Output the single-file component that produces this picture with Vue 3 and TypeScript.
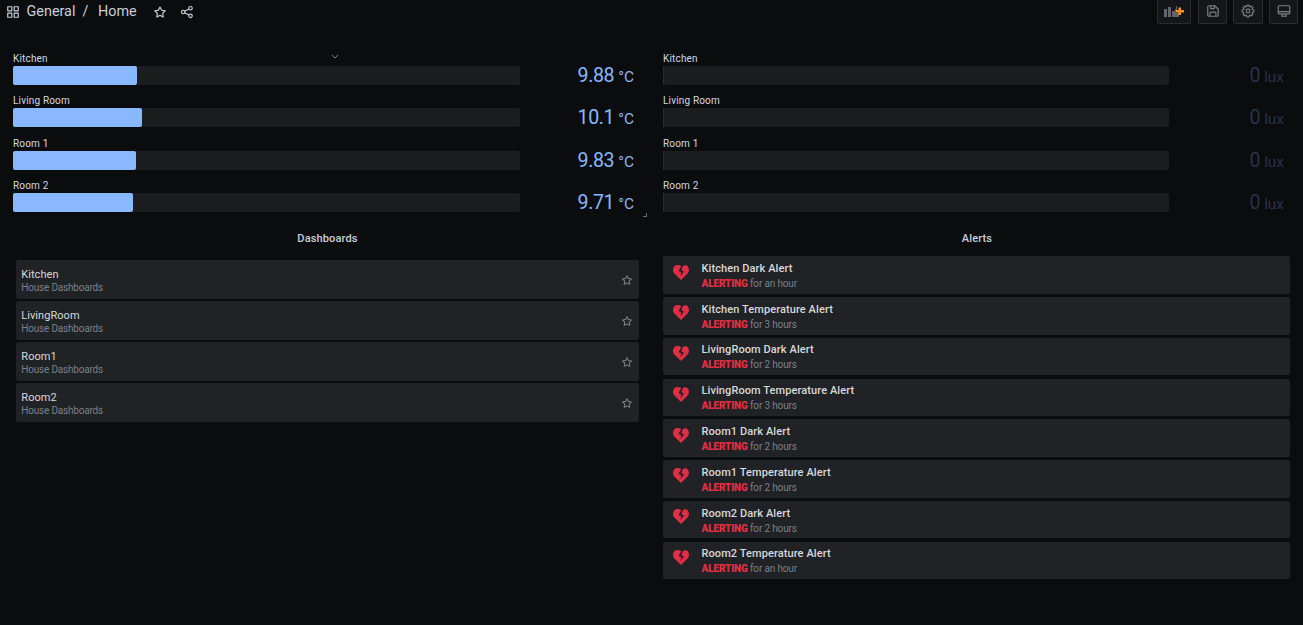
<script setup lang="ts">
interface Gauge { name: string; value: string; unit: string; fill: number }
interface Alert { name: string; since: string }

const temperatures: Gauge[] = [
  { name: 'Kitchen', value: '9.88', unit: '°C', fill: 124 },
  { name: 'Living Room', value: '10.1', unit: '°C', fill: 129 },
  { name: 'Room 1', value: '9.83', unit: '°C', fill: 123 },
  { name: 'Room 2', value: '9.71', unit: '°C', fill: 120 },
]
const lights: Gauge[] = ['Kitchen', 'Living Room', 'Room 1', 'Room 2'].map((name) => ({ name, value: '0', unit: 'lux', fill: 0 }))
const groups = [
  { kind: 'temp', gauges: temperatures },
  { kind: 'lux', gauges: lights },
]
const dashboards: string[] = ['Kitchen', 'LivingRoom', 'Room1', 'Room2']
const alerts: Alert[] = [
  { name: 'Kitchen Dark Alert', since: 'for an hour' },
  { name: 'Kitchen Temperature Alert', since: 'for 3 hours' },
  { name: 'LivingRoom Dark Alert', since: 'for 2 hours' },
  { name: 'LivingRoom Temperature Alert', since: 'for 3 hours' },
  { name: 'Room1 Dark Alert', since: 'for 2 hours' },
  { name: 'Room1 Temperature Alert', since: 'for 2 hours' },
  { name: 'Room2 Dark Alert', since: 'for 2 hours' },
  { name: 'Room2 Temperature Alert', since: 'for an hour' },
]
const starPath =
  'M22,9.67A1,1,0,0,0,21.14,9l-5.69-.83L12.9,3a1,1,0,0,0-1.8,0L8.55,8.16,2.86,9a1,1,0,0,0-.81.68,1,1,0,0,0,.25,1l4.13,4-1,5.68A1,1,0,0,0,6.9,21.44L12,18.77l5.1,2.67a.93.93,0,0,0,.46.12,1,1,0,0,0,.59-.19,1,1,0,0,0,.4-1l-1-5.68,4.13-4A1,1,0,0,0,22,9.67Zm-6.15,4a1,1,0,0,0-.29.88l.72,4.2-3.76-2a1.06,1.06,0,0,0-.94,0l-3.76,2,.72-4.2a1,1,0,0,0-.29-.88l-3-3,4.21-.61a1,1,0,0,0,.76-.55L12,5.7l1.88,3.82a1,1,0,0,0,.76.55l4.21.61Z'
</script>

<template>
  <div class="page">
    <header class="navbar">
      <svg class="apps" viewBox="0 0 24 24" fill="none" stroke="currentColor" stroke-width="2" stroke-linejoin="round">
        <path d="M3 3h7v7H3zM14 3h7v7h-7zM3 14h7v7H3zM14 14h7v7h-7z" />
      </svg>
      <span class="crumb folder">General</span>
      <span class="crumb slash">/</span>
      <span class="crumb title">Home</span>
      <svg class="nav-star" viewBox="0 0 24 24" fill="currentColor"><path :d="starPath" /></svg>
      <svg class="share" viewBox="0 0 24 24" fill="none" stroke="currentColor" stroke-width="2">
        <circle cx="18" cy="5.5" r="3" /><circle cx="5.5" cy="12" r="3" /><circle cx="18" cy="18.5" r="3" />
        <path d="M8.2 10.6l7.1-3.7M8.2 13.4l7.1 3.7" />
      </svg>
      <div class="actions">
        <button class="action wide" aria-label="Add panel">
          <svg class="add-panel" viewBox="0 0 20 14">
            <path class="columns" d="M0 5h3v8H0zM4 3h3v10H4zM8 7h3v6H8zM12 2h1v4h-1v3h3v4h-3zM11 5h1v8h-1z" />
            <path class="plus" d="M14.500 3.500h2.500v2.500h3v2.500h-3V11h-2.500V8.500H12V6h2.500z" />
          </svg>
        </button>
        <button class="action" aria-label="Save dashboard">
          <svg viewBox="0 0 24 24" fill="none" stroke="currentColor" stroke-width="2" stroke-linejoin="round">
            <path d="M3 5a2 2 0 0 1 2-2h10l6 6v10a2 2 0 0 1-2 2H5a2 2 0 0 1-2-2zM8 3v5h6V3M7 21v-6a1 1 0 0 1 1-1h8a1 1 0 0 1 1 1v6" />
          </svg>
        </button>
        <button class="action settings" aria-label="Settings">
          <svg viewBox="0 0 24 24" fill="none" stroke="currentColor" stroke-width="2" stroke-linejoin="round">
            <path d="M9.7 4.4L10.2 2h3.6l.5 2.4 1.5.6 2.1-1.4 2.5 2.5L19 8.2l.6 1.5 2.4.5v3.6l-2.4.5-.6 1.5 1.4 2.1-2.5 2.5-2.1-1.4-1.5.6-.5 2.4h-3.6l-.5-2.4-1.5-.6-2.1 1.4-2.5-2.5L5 15.8l-.6-1.5-2.4-.5v-3.6l2.4-.5L5 8.2 3.600 6.100l2.500-2.500L8.200 5z" />
            <circle cx="12" cy="12" r="3.2" />
          </svg>
        </button>
        <button class="action" aria-label="Cycle view mode">
          <svg viewBox="0 0 24 24" fill="none" stroke="currentColor" stroke-width="2" stroke-linejoin="round">
            <path d="M4 3h16a2 2 0 0 1 2 2v10a2 2 0 0 1-2 2H4a2 2 0 0 1-2-2V5a2 2 0 0 1 2-2zM2 13h20M9 17v4M15 17v4M7 21h10" />
          </svg>
        </button>
      </div>
    </header>

    <main class="grid">
      <section v-for="group in groups" :key="group.kind" class="gauges" :class="group.kind">
        <div v-for="g in group.gauges" :key="g.name" class="gauge">
          <div class="label">{{ g.name }}</div>
          <div class="track"><div class="fill" :style="{ width: g.fill + 'px' }"></div></div>
          <div class="reading"><span class="value">{{ g.value }}</span><span class="unit">{{ g.unit }}</span></div>
        </div>
        <svg v-if="group.kind === 'temp'" class="menu-caret" viewBox="0 0 8 5"><path d="M1 1l3 3 3-3" /></svg>
        <i v-if="group.kind === 'temp'" class="resize"></i>
      </section>

      <section class="panel dashboards">
        <h2>Dashboards</h2>
        <ul>
          <li v-for="d in dashboards" :key="d">
            <div class="text"><div class="name">{{ d }}</div><div class="sub">House Dashboards</div></div>
            <svg class="star" viewBox="0 0 24 24" fill="currentColor"><path :d="starPath" /></svg>
          </li>
        </ul>
      </section>

      <section class="panel alerts">
        <h2>Alerts</h2>
        <ul>
          <li v-for="a in alerts" :key="a.name">
            <svg class="heart" viewBox="0 0 16 15">
              <path d="M8 15L1.300 8.500C-.4 6.700-.4 3.400 1.200 1.600 2.900-.2 5.800-.4 8.300 1.200L5.500 6l2.800 1.200L7.400 11.200 11 6.400 8.300 5.200l1.500-4C11.600-.4 13.700.1 14.900 1.600c1.500 1.900 1.400 5.100-.3 6.900z" />
            </svg>
            <div class="text">
              <div class="name">{{ a.name }}</div>
              <div class="sub"><b>ALERTING</b><span>{{ a.since }}</span></div>
            </div>
          </li>
        </ul>
      </section>
    </main>
  </div>
</template>

<style>
html, body { background: #0b0c0e; overflow: hidden; }
</style>

<style scoped>
* { box-sizing: border-box; }
.page {
  width: 1303px; height: 625px; overflow: hidden; color: #c7d0d9; background: #0b0c0e;
  font-family: Roboto, "Liberation Sans", sans-serif;
}
svg { display: block; flex: none; }
.navbar { display: flex; align-items: center; height: 24px; padding-left: 6px; }
.apps { width: 14px; height: 14px; margin: 0 6.500px 1px 0; }
.crumb { font-size: 14.4px; line-height: 24px; height: 24px; }
.folder { width: 56px; }
.slash { width: 15.500px; }
.title { width: 55px; }
.nav-star { width: 14px; height: 14px; margin-right: 13px; }
.share { width: 14px; height: 14px; }
.actions { display: flex; margin: 0 5px 0 auto; height: 24px; }
.action {
  display: flex; align-items: flex-start; justify-content: center; width: 29px; height: 24px; margin: 0 0 0 6px;
  padding: 4px 0 0; color: #7b8087; background: #141619; border: 1px solid #2a2c30; border-top: 0; border-radius: 0 0 2px 2px;
}
.action svg { width: 14px; height: 14px; }
.action.wide { width: 34px; margin-right: 1px; }
.action.settings { width: 30px; }
.action .add-panel { width: 20px; height: 14px; }
.columns { fill: #62666c; }
.plus { fill: #f79520; }

.grid { display: grid; grid-template-columns: 626px 627px; column-gap: 24px; padding: 28.5px 0 0 13px; }
.gauges { position: relative; height: 176px; }
.gauge { display: grid; grid-template-columns: 507px 1fr; grid-template-rows: 13.500px 19px; height: 42.33px; }
.lux .gauge { grid-template-columns: 506px 1fr; }
.label { grid-column: 1 / 3; padding-top: 0.6px; font-size: 10px; line-height: 12px; letter-spacing: 0.17px; white-space: nowrap; color: #d2dae2; }
.track { height: 19px; background: #1c1d1f; border-radius: 2px; }
.fill { height: 19px; background: #8ab8ff; border-radius: 2px; }
.lux .fill { border-left: 1px solid #232d3e; border-radius: 0; box-sizing: content-box; }
.reading { display: flex; align-items: baseline; justify-content: flex-end; padding-right: 5px; line-height: 20px; color: #8ab8ff; white-space: nowrap; }
.lux .reading { padding-right: 6px; color: #27334a; }
.value { font-size: 19.6px; letter-spacing: -0.4px; }
.unit { margin-left: 4px; font-size: 15.4px; }
.menu-caret { position: absolute; left: 318px; top: 1.5px; width: 8px; height: 5px; fill: none; stroke: #7b8087; }
.resize { position: absolute; left: 630px; top: 160px; width: 4px; height: 4px; border: solid #66696e; border-width: 0 1px 1px 0; }

h2 { margin: 0; font-size: 11px; font-weight: 500; line-height: 14px; text-align: center; padding-top: 3.5px; letter-spacing: 0.15px; }
ul { list-style: none; margin: 0; padding: 0; }
li { display: flex; background: #202226; border-radius: 2px; }
.name { color: #d8d9da; font-size: 11px; line-height: 13px; white-space: nowrap; }
.sub { color: #7b8087; font-size: 10px; line-height: 12px; white-space: nowrap; }
.dashboards h2 { padding-left: 3px; }
.alerts h2 { padding-left: 1px; }
.dashboards ul { display: grid; row-gap: 2px; padding: 14px 0 0 3px; }
.dashboards li { height: 39px; align-items: flex-start; justify-content: space-between; padding: 8px 6px 0 5.300px; }
.dashboards .name { letter-spacing: 0.05px; }
.dashboards .sub { padding-top: 1px; letter-spacing: -0.2px; }
.star { width: 12px; height: 12px; margin-top: 5.500px; color: #7b8087; }
.alerts ul { display: grid; row-gap: 3.200px; padding-top: 10.200px; }
.alerts li { height: 37.600px; padding: 5.650px 0 0 10px; }
.heart { width: 16px; height: 15px; margin: 2.700px 12.500px 0 0; fill: #e02f44; }
.alerts .name { font-weight: 500; letter-spacing: 0.09px; }
.alerts .sub { padding-top: 3px; letter-spacing: -0.15px; }
.alerts b { display: inline-block; width: 48.500px; color: #e02f44; font-weight: 900; letter-spacing: -0.15px; }
</style>
